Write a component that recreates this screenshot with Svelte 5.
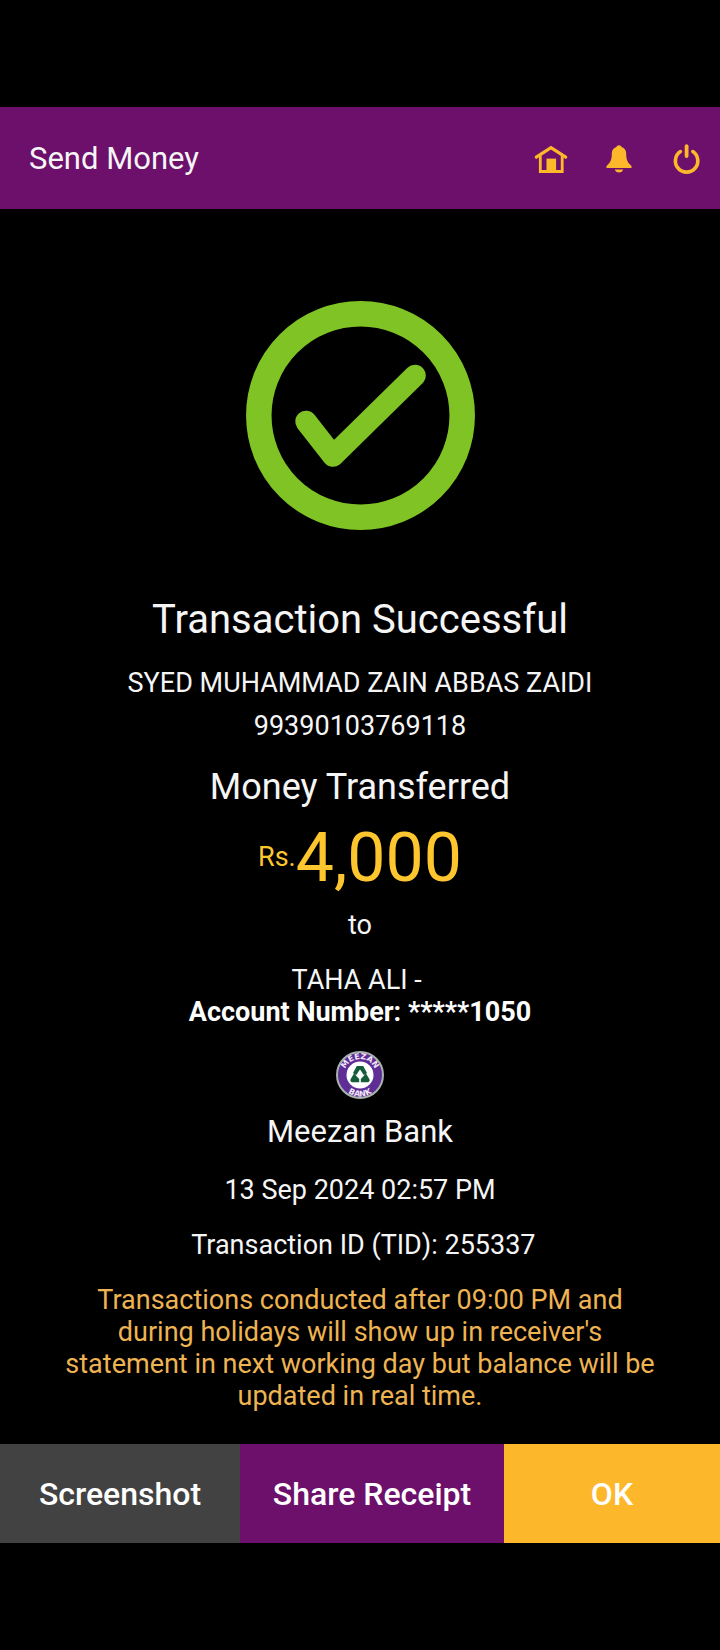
<script>
  const receipt = {
    sender: 'SYED MUHAMMAD ZAIN ABBAS ZAIDI',
    senderAccount: '99390103769118',
    currency: 'Rs.',
    amount: '4,000',
    receiver: 'TAHA ALI -',
    receiverAccount: 'Account Number: *****1050',
    bank: 'Meezan Bank',
    date: '13 Sep 2024 02:57 PM',
    tid: '255337'
  };
</script>

<div class="screen">
  <header>
    <h1>Send Money</h1>
    <nav>
      <button class="icon" aria-label="Home">
        <svg viewBox="0 0 34 34" width="34" height="34">
          <path d="M2.3 15.2 17 5.600 31.700 15.200" fill="none" stroke="currentColor" stroke-width="3.200" stroke-linecap="round" />
          <path d="M6.300 13.500V29.500H28.200V13.500" fill="none" stroke="currentColor" stroke-width="2.800" />
          <path d="M12.500 16.600h9.600V30h-9.600z" fill="currentColor" />
        </svg>
      </button>
      <button class="icon" aria-label="Notifications">
        <svg viewBox="0 0 34 34" width="34" height="34" fill="currentColor">
          <path d="M17 3.200c1.300 0 2.200.7 2.600 1.800 3 .9 4.600 3.400 4.600 6.600 0 5.600 1 8.300 3.800 10.900 1 .9 1.700 1.700 1.700 2.600 0 .7-.5 1-1.200 1H5.500c-.7 0-1.200-.3-1.200-1 0-.9.7-1.700 1.700-2.600 2.800-2.600 3.800-5.300 3.800-10.900 0-3.200 1.600-5.700 4.600-6.600.4-1.100 1.300-1.800 2.600-1.800z" />
          <path d="M12.800 27.600h8.400c-.5 1.800-2.100 3-4.200 3s-3.700-1.200-4.200-3z" />
        </svg>
      </button>
      <button class="icon" aria-label="Log out">
        <svg viewBox="0 0 34 34" width="34" height="34" fill="none" stroke="currentColor" stroke-linecap="round">
          <path d="M10.400 9.600a11.200 11.200 0 1 0 12.400 0" stroke-width="3.600" />
          <path d="M16.600 4.200v9.800" stroke-width="3.800" />
        </svg>
      </button>
    </nav>
  </header>

  <main>
    <svg class="check" viewBox="0 0 229 229" fill="none" stroke="#7fc424" aria-hidden="true">
      <circle cx="114.500" cy="114.500" r="101.700" stroke-width="25.500" />
      <path d="M60 120.500 87 155 169 74.500" stroke-width="21.500" stroke-linecap="round" stroke-linejoin="round" />
    </svg>

    <h2>Transaction Successful</h2>
    <p class="block">{receipt.sender}</p>
    <p class="number">{receipt.senderAccount}</p>

    <h3 class="block">Money Transferred</h3>
    <p class="amount"><span class="currency">{receipt.currency}</span><span class="value">{receipt.amount}</span></p>
    <p class="to">to</p>

    <p class="block">{receipt.receiver}&nbsp;</p>
    <p><strong>{receipt.receiverAccount}</strong></p>

    <svg class="bank-logo" viewBox="0 0 48 48" role="img" aria-label="Meezan Bank logo">
      <defs>
        <path id="arc-top" d="M8 24a16 16 0 0 1 32 0" />
        <path id="arc-bottom" d="M2.500 24a21.500 21.500 0 0 0 43 0" />
      </defs>
      <circle cx="24" cy="24" r="23" fill="#5f2d96" stroke="#a9b3ae" stroke-width="2" />
      <circle cx="24" cy="24" r="13.500" fill="#fff" />
      <text text-anchor="middle"><textPath href="#arc-top" startOffset="50%">MEEZAN</textPath></text>
      <text text-anchor="middle"><textPath href="#arc-bottom" startOffset="50%">BANK</textPath></text>
      <g fill="#155c38">
        <path d="M20.800 15h6.400l3.800 7-3 2.200L24 18.600l-4 5.600-3-2.200z" />
        <path d="M18 22.600 23.200 28V31.200H16.600c-2 0-2.700-1.600-1.900-3.200z" />
        <path d="M30 22.600 24.800 28V31.200H31.400c2 0 2.700-1.600 1.900-3.200z" />
      </g>
    </svg>
    <p class="bank">{receipt.bank}</p>
    <p class="block">{receipt.date}</p>
    <p class="block">&nbsp;Transaction ID (TID): {receipt.tid}</p>
    <p class="block notice">
      Transactions conducted after 09:00 PM and during holidays will show up in receiver's statement in next working day but balance will be updated in real time.
    </p>
  </main>

  <footer>
    <button class="screenshot">Screenshot</button>
    <button class="share">Share Receipt</button>
    <button class="ok">OK</button>
  </footer>
</div>

<style>
  :global(body) {
    margin: 0;
    background: #000;
  }

  .screen {
    box-sizing: border-box;
    min-height: 100vh;
    padding: 107px 0;
    background: #000;
    color: #f5f5f5;
    font-family: Roboto, 'Liberation Sans', sans-serif;
    font-size: 27px;
    line-height: 32px;
  }

  h1,
  h2,
  h3,
  p {
    margin: 0;
    font-weight: 400;
  }

  button {
    margin: 0;
    border: 0;
    font-family: inherit;
    cursor: pointer;
  }

  header {
    display: flex;
    align-items: center;
    justify-content: space-between;
    padding: 32px 16px 30px 29px;
    background: #6c106c;
  }

  h1 {
    font-size: 31px;
    line-height: 40px;
  }

  nav {
    display: flex;
    gap: 34px;
  }

  .icon {
    display: flex;
    padding: 0;
    background: none;
    color: #fcb72a;
  }

  main {
    display: flex;
    flex-direction: column;
    align-items: center;
    padding: 92px 64px 32px;
    text-align: center;
  }

  .check {
    width: 229px;
    height: 229px;
    margin-bottom: 66px;
  }

  h2 {
    font-size: 40px;
    line-height: 48px;
  }

  h3 {
    font-size: 36px;
    line-height: 44px;
  }

  .block {
    margin-top: 23px;
  }

  .number {
    margin-top: 11px;
  }

  .amount {
    display: flex;
    align-items: center;
    margin-top: 9px;
    color: #fdc62f;
  }

  .currency {
    line-height: 34px;
    padding-bottom: 2px;
  }

  .value {
    font-size: 68px;
    line-height: 80px;
  }

  .to {
    margin-top: 11px;
  }

  strong {
    font-weight: 700;
    color: #fff;
  }

  .bank-logo {
    width: 48px;
    height: 48px;
    margin-top: 23px;
  }

  .bank-logo text {
    fill: #efe6f7;
    font-family: 'DejaVu Sans', sans-serif;
    font-size: 8px;
    font-weight: 700;
  }

  .bank {
    margin-top: 14px;
    font-size: 31px;
    line-height: 38px;
  }

  .notice {
    color: #eeb352;
  }

  footer {
    display: grid;
    grid-template-columns: 240fr 264fr 216fr;
  }

  footer button {
    padding: 31px 0 30px;
    color: #fff;
    font-size: 32px;
    font-weight: 500;
    line-height: 38px;
  }

  .screenshot {
    background: #424242;
  }

  .share {
    background: #6c106c;
  }

  .ok {
    background: #fcb72a;
  }
</style>
